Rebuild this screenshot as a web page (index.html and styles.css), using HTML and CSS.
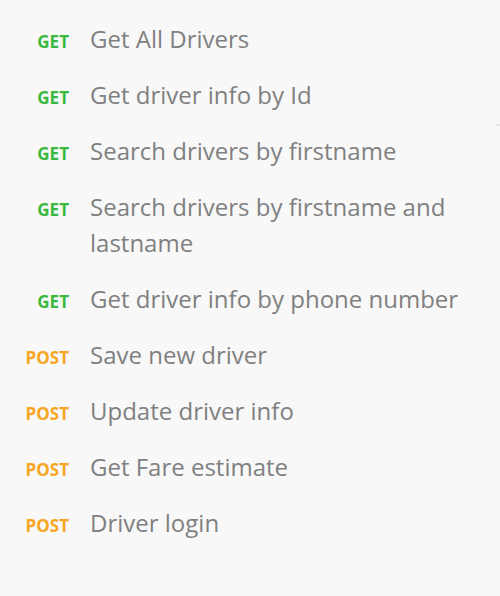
FILE: index.html
```html
<!DOCTYPE html>
<html>
<head>
<meta charset="utf-8">
<link rel="stylesheet" href="styles.css">
</head>
<body>
<ul class="endpoints">
  <li class="row"><span class="method get">GET</span><span class="name">Get All Drivers</span></li>
  <li class="row"><span class="method get">GET</span><span class="name">Get driver info by Id</span></li>
  <li class="row"><span class="method get">GET</span><span class="name">Search drivers by firstname</span></li>
  <li class="row"><span class="method get">GET</span><span class="name">Search drivers by firstname and lastname</span></li>
  <li class="row"><span class="method get">GET</span><span class="name">Get driver info by phone number</span></li>
  <li class="row"><span class="method post">POST</span><span class="name">Save new driver</span></li>
  <li class="row"><span class="method post">POST</span><span class="name">Update driver info</span></li>
  <li class="row"><span class="method post">POST</span><span class="name">Get Fare estimate</span></li>
  <li class="row"><span class="method post">POST</span><span class="name">Driver login</span></li>
</ul>
<div class="edge-mark"></div>
</body>
</html>
```
FILE: styles.css
```css
html, body {
  margin: 0;
  padding: 0;
  background: #f8f8f8;
  height: 100%;
}
body {
  font-family: "Open Sans", "Liberation Sans", sans-serif;
  position: relative;
}
.endpoints {
  list-style: none;
  margin: 0;
  padding: 11px 0 0 0;
  width: 470px;
}
.row {
  display: flex;
  align-items: baseline;
  gap: 21px;
  padding: 10px 0;
}
.method {
  flex: 0 0 69px;
  text-align: right;
  font-size: 17px;
  font-weight: 700;
}
.get { color: #3cb83f; }
.post { color: #f6a623; }
.name {
  font-size: 24px;
  line-height: 36px;
  color: #808080;
}
.edge-mark {
  position: absolute;
  right: 0;
  top: 124px;
  width: 4px;
  height: 2px;
  background: #e6e6e6;
}
```
